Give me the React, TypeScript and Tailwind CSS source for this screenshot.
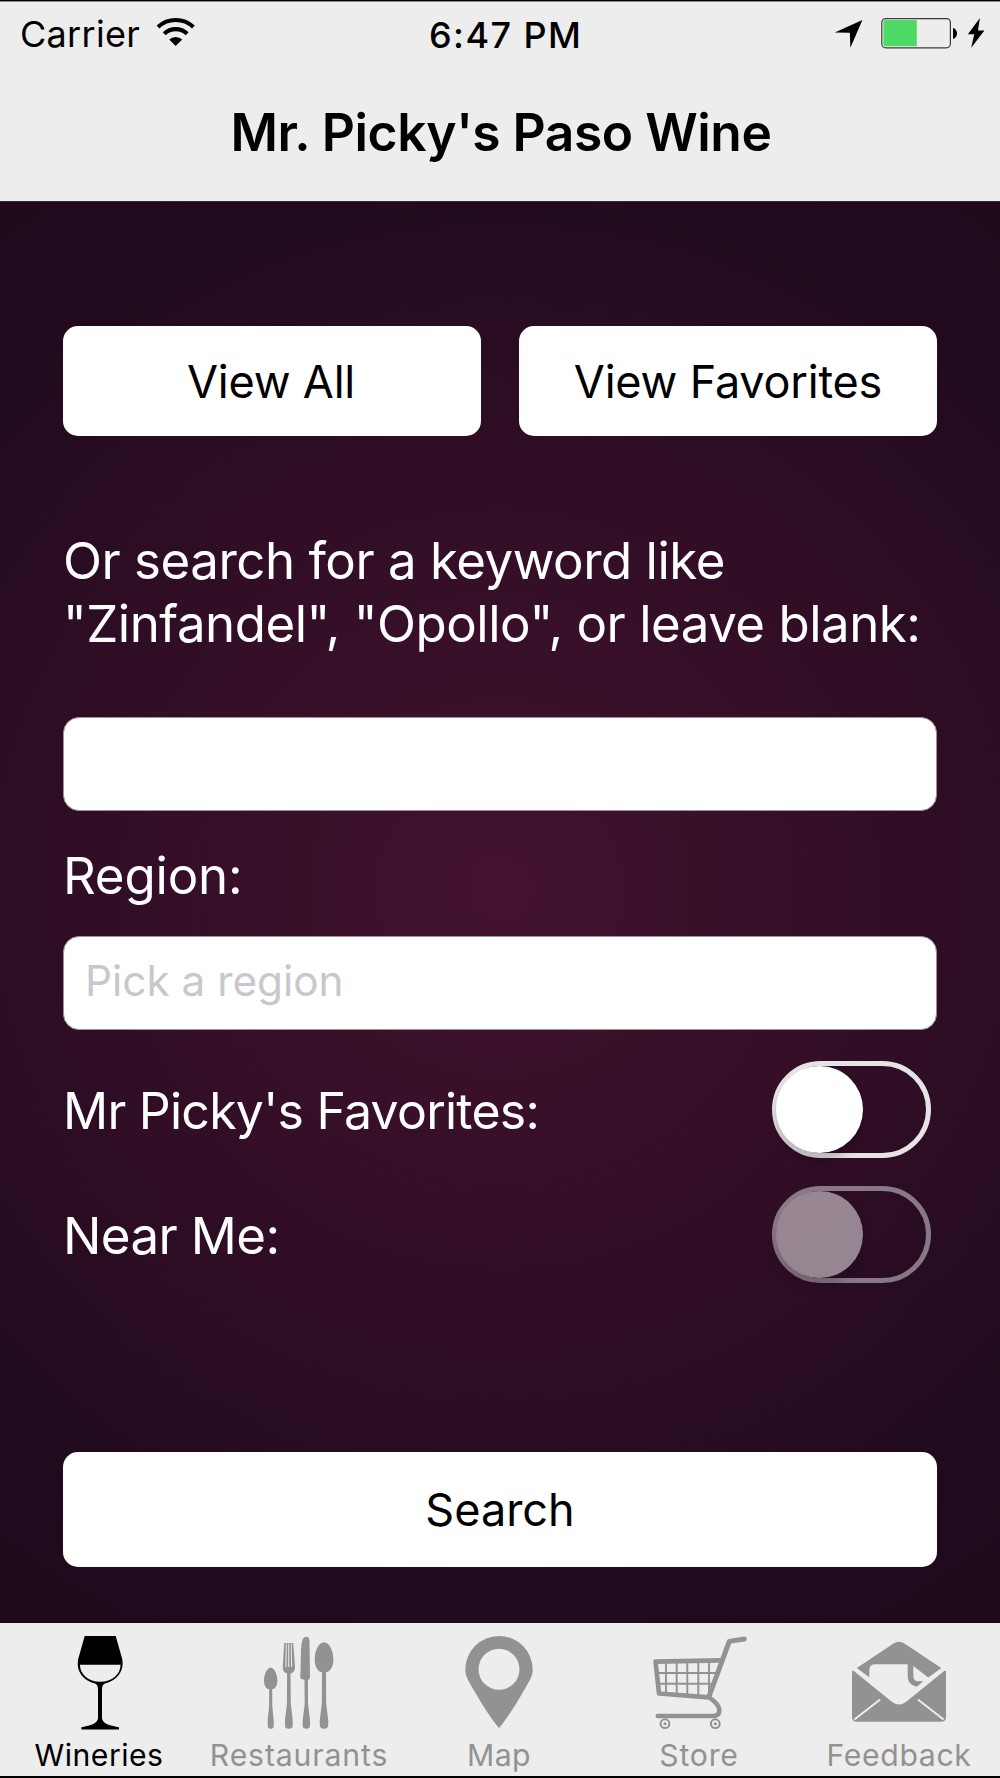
import { useState } from 'react';
import type { ReactNode } from 'react';

type Tab = {
  name: string;
  icon: ReactNode;
  spacing: string;
};

function WifiIcon() {
  return (
    <svg className="w-10 h-[34px]" viewBox="0 0 40 34" fill="none">
      <path d="M2 10A26 26 0 0 1 37.4 10" stroke="currentColor" strokeWidth="4" />
      <path d="M8.2 16.7A16.8 16.8 0 0 1 31.2 16.7" stroke="currentColor" strokeWidth="4.2" />
      <path d="M19.7 29L13.2 22.6A9.2 9.2 0 0 1 26.2 22.6Z" fill="currentColor" />
    </svg>
  );
}

function LocationIcon() {
  return (
    <svg className="w-[30px] h-[34px]" viewBox="834 17 30 34" fill="currentColor">
      <path d="M862.4 20L850.4 47.8L849.8 32.8L834.8 32.4Z" />
    </svg>
  );
}

function BatteryIcon() {
  return (
    <svg className="w-[78px] h-[34px]" viewBox="880 17 78 34">
      <rect x="881.8" y="18.6" width="68.6" height="29.2" rx="4" fill="none" stroke="#3c3c3c" strokeWidth="1.2" />
      <path d="M885.5 20H916.8V46.3H885.5Q883.4 46.3 883.4 44.3V22Q883.4 20 885.5 20Z" fill="#4cd964" />
      <path d="M953 28C958.4 29.6 958.4 37.4 953 39Z" fill="#000" />
    </svg>
  );
}

function BoltIcon() {
  return (
    <svg className="w-[18px] h-[34px]" viewBox="967 17 18 34" fill="currentColor">
      <path d="M979.9 18L967.9 34.2H974.2L971.2 47.8L984.4 30.5H978Z" />
    </svg>
  );
}

function WineIcon() {
  return (
    <svg className="w-[120px] h-[100px]" viewBox="0 0 120 100" fill="currentColor">
      <path
        fillRule="evenodd"
        d="M44.7 6H75.7L82.2 29C84.6 41 77 50.5 64.5 53.8C62.6 54.8 62 56.5 62 60V88C62 93 69 95.8 79 97.2V99.6H41.4V97.2C51 95.8 58 93 58 88V60C58 56.5 57.4 54.8 55.5 53.8C43 50.5 35.8 41 38.2 29ZM39.9 34.8C40.3 45 48.5 51.8 60.2 51.8S80.3 45 80.6 34.8Z"
      />
    </svg>
  );
}

function CutleryIcon() {
  return (
    <svg className="w-[120px] h-[100px]" viewBox="0 0 120 100" fill="currentColor">
      {/* tea spoon */}
      <path d="M30.7 37.7C34.5 37.7 37.4 45 37.4 50.5C37.4 55.5 35 59.3 32.2 59.3L32.3 76L33.7 90V96Q33.7 98.7 30.7 98.7T27.7 96V90L29.1 76L29.2 59.3C26.4 59.3 24 55.5 24 50.5C24 45 26.9 37.7 30.7 37.7Z" />
      {/* fork */}
      <path d="M44.2 13H53.2L55 37C55 41 53 43 50.5 43.5L50.8 74L52.7 90V95.5Q52.7 98.7 48.8 98.7T45 95.5V90L46.9 74L47.1 43.5C44.5 43 42.7 41 42.7 37Z" />
      <path d="M46.3 13.5L45.9 37M48.7 13.5V37M51.2 13.5L51.6 37" stroke="#ededed" strokeWidth="1" fill="none" />
      {/* knife */}
      <path d="M66 6.7Q69.5 6.7 69.5 11L70 47Q70 49.5 67.9 50L68 74L70 90V95.5Q70 98.7 66.3 98.7T62.7 95.5V90L64.7 74L64.5 50L60.3 48.5L61 20Q61.3 6.7 66 6.7Z" />
      {/* table spoon */}
      <path d="M84 12.3C89.5 12.3 93.4 21 93.4 29.5C93.4 36.5 90 42.3 86 42.3L86.2 74L88.2 90V95Q88.2 98.7 84 98.7T79.8 95V90L81.8 74L82 42.3C78 42.3 74.7 36.5 74.7 29.5C74.7 21 78.5 12.3 84 12.3Z" />
    </svg>
  );
}

function PinIcon() {
  return (
    <svg className="w-[120px] h-[100px]" viewBox="0 0 120 100" fill="currentColor">
      <path
        fillRule="evenodd"
        d="M59 98.3Q46 82 35 62C28.5 51 25.3 46 25.3 39.7A33.7 33.7 0 0 1 92.7 39.7C92.7 46 89.5 51 83 62Q72 82 59 98.3ZM59 18.8A20.5 20.5 0 1 0 59 59.8A20.5 20.5 0 1 0 59 18.8Z"
      />
    </svg>
  );
}

function CartIcon() {
  return (
    <svg className="w-[120px] h-[100px]" viewBox="0 0 120 100" fill="none" stroke="currentColor">
      <path d="M104.2 9L89.3 11.4L69 66.5" strokeWidth="5" strokeLinecap="round" strokeLinejoin="round" />
      <path
        d="M80.5 30.4L15.5 31.6L19 63.5L69 67.4Q79.3 74 79.3 80.5Q79.3 86 73 86H17.8"
        strokeWidth="4.6"
        strokeLinecap="round"
        strokeLinejoin="round"
      />
      <path d="M26 32V64M36.7 32V65M47.3 32V66M58.3 32V66M69 32V62M16 43H76M18 53.7H72" strokeWidth="1.9" />
      <circle cx="25" cy="93.7" r="4.4" strokeWidth="2" />
      <circle cx="75.3" cy="93.7" r="4.4" strokeWidth="2" />
      <circle cx="25" cy="93.7" r="1.5" fill="currentColor" stroke="none" />
      <circle cx="75.3" cy="93.7" r="1.5" fill="currentColor" stroke="none" />
    </svg>
  );
}

function MailIcon() {
  return (
    <svg className="w-[120px] h-[100px]" viewBox="0 0 120 100" fill="currentColor">
      <path d="M53.5 13.5Q59 10 64.5 13.5L101.2 38L88.3 47.4L73.3 36V46Q73.3 51.3 78.5 51.3H83.5L76.7 56.7Q67.7 55 67.7 46.5V34.3H35.3Q29.3 34.3 29.3 40V47.3L16.8 38Z" />
      <path d="M12 43V41L13.5 40.8L51.5 71.5Q59 77.5 66.5 71.5L104.5 40.8L106 41V87Q106 91.8 101 91.8H17Q12 91.8 12 87Z" />
      <path d="M39.5 70L15 89M78.5 70L103 89" stroke="#ededed" strokeWidth="2" strokeLinecap="round" />
    </svg>
  );
}

const tabs: Tab[] = [
  { name: 'Wineries', icon: <WineIcon />, spacing: 'tracking-[0.45px]' },
  { name: 'Restaurants', icon: <CutleryIcon />, spacing: 'tracking-[0.85px]' },
  { name: 'Map', icon: <PinIcon />, spacing: 'tracking-[0.4px]' },
  { name: 'Store', icon: <CartIcon />, spacing: 'tracking-[0.75px]' },
  { name: 'Feedback', icon: <MailIcon />, spacing: 'tracking-[0.65px]' },
];

function Switch({ label, disabled = false }: { label: string; disabled?: boolean }) {
  const [on, setOn] = useState(false);

  return (
    <button
      type="button"
      role="switch"
      aria-label={label}
      aria-checked={on}
      disabled={disabled}
      onClick={() => setOn(!on)}
      className={`flex w-[159px] h-[97px] mr-1.5 rounded-full border-[5px] border-[#e6e3e6] ${on ? 'justify-end' : 'justify-start'} ${disabled ? 'opacity-50' : ''}`}
    >
      <span className="block size-[87px] -ml-px rounded-full bg-white shadow-[0_8px_10px_rgba(0,0,0,0.2)]" />
    </button>
  );
}

export default function App() {
  const [activeTab, setActiveTab] = useState('Wineries');
  const [keyword, setKeyword] = useState('');
  const [region, setRegion] = useState('');

  return (
    <div className="flex flex-col w-[1000px] h-[1778px] overflow-hidden font-[Inter,sans-serif] text-black bg-[#ededed]">
      <header className="h-[202px] border-t border-b border-t-black border-b-[#3a2b38] shadow-[inset_0_1px_0_#8a8a8a]">
        {/* Status bar */}
        <div className="grid grid-cols-[429px_1fr_auto] items-center h-[66px] pr-[15px]">
          <div className="flex items-center gap-4 pl-5">
            <span className="text-[36px] leading-9 tracking-[0.3px]">Carrier</span>
            <WifiIcon />
          </div>
          <span className="pt-px text-[36px] leading-9 font-medium tracking-[1.4px]">6:47 PM</span>
          <div className="flex items-center">
            <LocationIcon />
            <span className="w-4" />
            <BatteryIcon />
            <span className="w-[9px]" />
            <BoltIcon />
          </div>
        </div>
        <h1 className="h-[131px] pl-0.5 text-center text-[51.5px] leading-[131px] font-semibold tracking-[-0.45px]">
          Mr. Picky's Paso Wine
        </h1>
      </header>

      <main className="flex flex-col h-[1421px] px-[63px] pt-[124px] text-white bg-[radial-gradient(circle_at_500px_687px,#43122f_0px,#3a1029_200px,#310e26_400px,#280c21_580px,#210a1d_710px,#1e091b_900px)]">
        <div className="grid grid-cols-2 gap-[38px]">
          <button type="button" className="h-[110px] pt-0.5 pr-0.5 rounded-[15px] bg-white text-black text-[45px] tracking-[-0.2px]">
            View All
          </button>
          <button type="button" className="h-[110px] pt-0.5 rounded-[15px] bg-white text-black text-[45px] tracking-[-0.2px]">
            View Favorites
          </button>
        </div>

        <p className="mt-[94px] text-[51px] leading-[62.5px] tracking-[-0.49px] whitespace-nowrap">
          Or search for a keyword like
          <br />
          "Zinfandel", "Opollo", or leave blank:
        </p>
        <input
          value={keyword}
          onChange={(e) => setKeyword(e.target.value)}
          aria-label="Keyword"
          className="mt-[62px] h-[94px] shrink-0 px-[21px] rounded-[16px] border border-[#9c909a] bg-white text-black text-[42.3px] outline-none"
        />

        <label htmlFor="region" className="mt-[33px] h-[63px] text-[51px] leading-[63px] tracking-[-0.2px]">
          Region:
        </label>
        <input
          id="region"
          value={region}
          onChange={(e) => setRegion(e.target.value)}
          placeholder="Pick a region"
          className="mt-[29px] h-[94px] shrink-0 px-[21px] pb-[5px] rounded-[16px] border border-[#9c909a] bg-white text-black text-[42.3px] placeholder:text-[#c7c7cd] outline-none"
        />

        <div className="flex items-center justify-between mt-[30px] h-[98px]">
          <span className="pt-[3px] text-[50px] leading-[62px] tracking-[-0.75px]">Mr Picky's Favorites:</span>
          <Switch label="Mr Picky's Favorites" />
        </div>
        <div className="flex items-center justify-between mt-[27px] h-[98px]">
          <span className="pt-[3px] text-[51px] leading-[62px] tracking-[-0.6px]">Near Me:</span>
          <Switch label="Near Me" disabled />
        </div>

        <button type="button" className="mt-[169px] h-[115px] shrink-0 rounded-[15px] bg-white text-black text-[45px]">
          Search
        </button>
      </main>

      <nav className="grid grid-cols-5 h-[155px] border-b-2 border-black bg-[#ededed]">
        {tabs.map((tab) => (
          <button
            key={tab.name}
            type="button"
            onClick={() => setActiveTab(tab.name)}
            className={`flex flex-col items-center pt-[7px] ${activeTab === tab.name ? 'text-black' : 'text-[#929292]'}`}
          >
            {tab.icon}
            <span className={`mt-[5px] pr-0.5 text-[30.2px] leading-10 ${tab.spacing}`}>{tab.name}</span>
          </button>
        ))}
      </nav>
    </div>
  );
}
